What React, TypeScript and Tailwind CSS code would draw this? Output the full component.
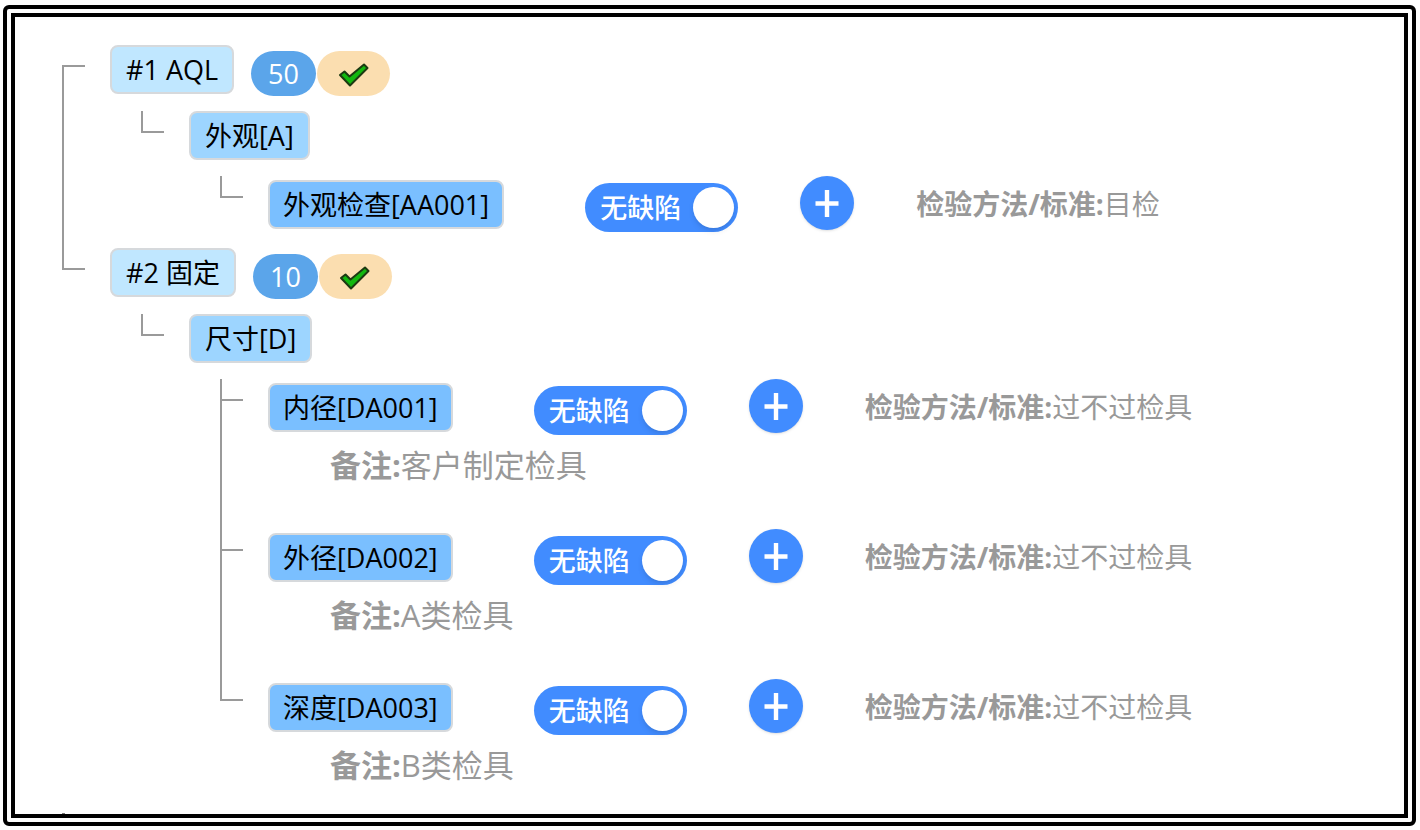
import { useState } from "react";
import clsx from "clsx";

interface CheckItem {
  code: string;
  name: string;
  method: string;
  remark?: string;
}

interface Category {
  name: string;
  items: CheckItem[];
}

interface Plan {
  title: string;
  count: number;
  categories: Category[];
}

const plans: Plan[] = [
  {
    title: "#1 AQL",
    count: 50,
    categories: [
      {
        name: "外观[A]",
        items: [{ code: "AA001", name: "外观检查", method: "目检" }],
      },
    ],
  },
  {
    title: "#2 固定",
    count: 10,
    categories: [
      {
        name: "尺寸[D]",
        items: [
          { code: "DA001", name: "内径", method: "过不过检具", remark: "客户制定检具" },
          { code: "DA002", name: "外径", method: "过不过检具", remark: "A类检具" },
          { code: "DA003", name: "深度", method: "过不过检具", remark: "B类检具" },
        ],
      },
    ],
  },
];

export default function App() {
  return (
    <div className="flex min-h-screen bg-white pt-[5px] pr-1 pb-1 pl-[3px] font-['Open_Sans','Noto_Sans_CJK_SC',sans-serif] text-[27px] leading-[44px] text-black">
      <main className="flex flex-1 flex-col rounded-md border-12 border-double border-black pt-7 pl-[47px]">
        <ul>
          {plans.map((plan, i) => {
            const last = i === plans.length - 1;
            return (
              <li key={plan.title} className="flex">
                <Connector root={i === 0} last={last} />
                <div className={clsx("min-w-0 flex-1", !last && "pb-4")}>
                  <PlanHeader plan={plan} />
                  {plan.categories.map((category) => (
                    <CategoryNode key={category.name} category={category} />
                  ))}
                </div>
              </li>
            );
          })}
        </ul>
        <div className="mt-auto h-px w-[3px] bg-[#777777]" />
      </main>
    </div>
  );
}

// Elbow line in front of a node. The first root node has nothing above it.
function Connector({ root, last }: { root?: boolean; last: boolean }) {
  return (
    <div className="flex w-12 shrink-0 flex-col">
      <div
        className={clsx(
          "h-[22px] w-[23px] border-b-2 border-[#9a9a9a]",
          !root && "border-l-2"
        )}
      />
      {!last && <div className="w-[23px] flex-1 border-l-2 border-[#9a9a9a]" />}
    </div>
  );
}

function PlanHeader({ plan }: { plan: Plan }) {
  return (
    <div className="flex items-start">
      <Chip className="bg-[#c0e7ff] px-[14px]">{plan.title}</Chip>
      <span className="mt-[6px] ml-[17px] flex h-[45px] w-[65px] items-center justify-center rounded-full bg-[#5ba5ea] text-white">
        {plan.count}
      </span>
      <span className="mt-[6px] ml-px flex h-[45px] w-[73px] items-center justify-center rounded-full bg-[#fbdeb0]">
        <CheckMark />
      </span>
    </div>
  );
}

function CategoryNode({ category }: { category: Category }) {
  return (
    <div className="ml-[31px] flex pt-[15px]">
      <Connector last />
      <div className="min-w-0 flex-1">
        <Chip className="bg-[#9dd5ff] px-[14px]">{category.name}</Chip>
        <ul className="ml-[31px] pt-4">
          {category.items.map((item, i) => {
            const last = i === category.items.length - 1;
            return (
              <li key={item.code} className="flex">
                <Connector last={last} />
                <div className={clsx("min-w-0 flex-1", !last && "pb-[42px]")}>
                  <ItemNode item={item} />
                </div>
              </li>
            );
          })}
        </ul>
      </div>
    </div>
  );
}

function ItemNode({ item }: { item: CheckItem }) {
  return (
    <>
      <div className="flex items-start whitespace-nowrap">
        <Chip className="mt-1 bg-[#7abfff] px-[13px]">
          {item.name}[{item.code}]
        </Chip>
        <DefectSwitch label="无缺陷" />
        <button
          type="button"
          aria-label="添加缺陷"
          className="ml-[62px] flex size-[54px] shrink-0 items-center justify-center rounded-full bg-[#418cff] shadow-sm"
        >
          <svg viewBox="0 0 54 54" className="size-[54px]" stroke="#fff" strokeWidth="4.4">
            <path d="M15.5 27.5h23M27 14v27" />
          </svg>
        </button>
        <p className="mt-[6px] ml-[62px] text-[28px] text-[#999999]">
          <b>检验方法/标准:</b>
          {item.method}
        </p>
      </div>
      {item.remark && (
        <p className="mt-2 ml-[62px] text-[31px] text-[#999999]">
          <b>备注:</b>
          {item.remark}
        </p>
      )}
    </>
  );
}

function DefectSwitch({ label }: { label: string }) {
  const [checked, setChecked] = useState(true);

  return (
    <label
      className={clsx(
        "relative mt-[7px] ml-[81px] flex h-[49px] w-[153px] shrink-0 cursor-pointer items-center justify-between rounded-full pr-1 pl-[15px] font-medium text-white",
        checked ? "bg-[#418cff]" : "flex-row-reverse bg-gray-400"
      )}
    >
      <input
        type="checkbox"
        role="switch"
        checked={checked}
        onChange={(e) => setChecked(e.target.checked)}
        className="sr-only"
      />
      <span>{label}</span>
      <span className="size-[41px] rounded-full bg-white shadow-md" />
    </label>
  );
}

function Chip({ className, children }: { className?: string; children: React.ReactNode }) {
  return (
    <span
      className={clsx(
        "block h-[49px] w-fit shrink-0 rounded-lg border-2 border-[#d6d9dc] leading-[46px] whitespace-nowrap",
        className
      )}
    >
      {children}
    </span>
  );
}

function CheckMark() {
  return (
    <svg viewBox="0 0 32 26" className="h-[26px] w-8">
      <path
        d="M2 14 6.5 10.5 11.5 15.5 26 3.5 29.5 7 12 24.5Z"
        fill="#12b80f"
        stroke="#1c3a12"
        strokeWidth="2"
        strokeLinejoin="round"
      />
    </svg>
  );
}
